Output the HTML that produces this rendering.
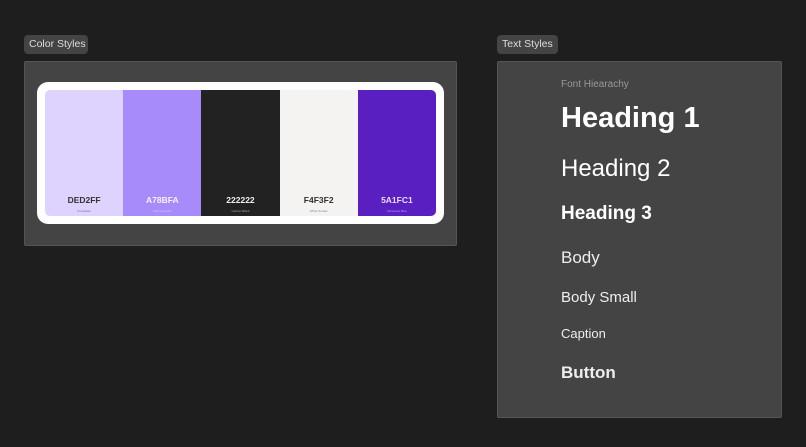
<!DOCTYPE html>
<html><head><style>
body{margin:0;width:806px;height:447px;background:#1e1e1e;font-family:"Liberation Sans",sans-serif;position:relative;overflow:hidden}
.lbl{position:absolute;top:35px;height:19px;background:#444;border-radius:4px;color:#ddd;font-size:10.5px;line-height:19px;padding:0 5px;box-sizing:border-box;white-space:nowrap}
.panel{position:absolute;top:61px;background:#444;border:1px solid #555;box-sizing:border-box;border-radius:2px}
.card{position:absolute;left:37px;top:82px;width:407px;height:142px;background:#fff;border-radius:11px}
.sw{position:absolute;top:90px;height:126px;width:78.2px;text-align:center}
.sw b{position:absolute;top:105px;left:0;right:0;font-size:8.5px}
.sw i{position:absolute;top:119px;left:0;right:0;font-size:3px;font-style:normal;opacity:.6}
.t{position:absolute;left:561px;color:#fff;white-space:nowrap;line-height:1}
</style></head><body>
<div class="lbl" style="left:24px;width:64px">Color Styles</div>
<div class="panel" style="left:24px;width:433px;height:185px"></div>
<div class="card"></div>
<div class="sw" style="left:45px;background:#DED2FF;color:#333;border-radius:5px 0 0 5px"><b>DED2FF</b><i>Periwinkle</i></div>
<div class="sw" style="left:123.2px;background:#A78BFA;color:#f4f0ff"><b>A78BFA</b><i>Soft Lavender</i></div>
<div class="sw" style="left:201.4px;background:#222;color:#eee"><b>222222</b><i>Carbon Black</i></div>
<div class="sw" style="left:279.6px;background:#F4F3F2;color:#333"><b>F4F3F2</b><i>White Smoke</i></div>
<div class="sw" style="left:357.8px;background:#5A1FC1;color:#e8ddff;border-radius:0 5px 5px 0"><b>5A1FC1</b><i>Ultraviolet Blue</i></div>
<div class="lbl" style="left:497px;width:61px">Text Styles</div>
<div class="panel" style="left:497px;width:285px;height:357px"></div>
<div class="t" style="top:80px;font-size:10px;color:#999">Font Hiearachy</div>
<div class="t" style="top:104px;font-size:29px;font-weight:bold">Heading 1</div>
<div class="t" style="top:157px;font-size:24px">Heading 2</div>
<div class="t" style="top:204px;font-size:19px;font-weight:bold">Heading 3</div>
<div class="t" style="top:249px;font-size:17px;color:#eee">Body</div>
<div class="t" style="top:290px;font-size:15px;color:#eee">Body Small</div>
<div class="t" style="top:327px;font-size:13px;color:#eee">Caption</div>
<div class="t" style="top:364px;font-size:17px;font-weight:bold;color:#eee">Button</div>
</body></html>
